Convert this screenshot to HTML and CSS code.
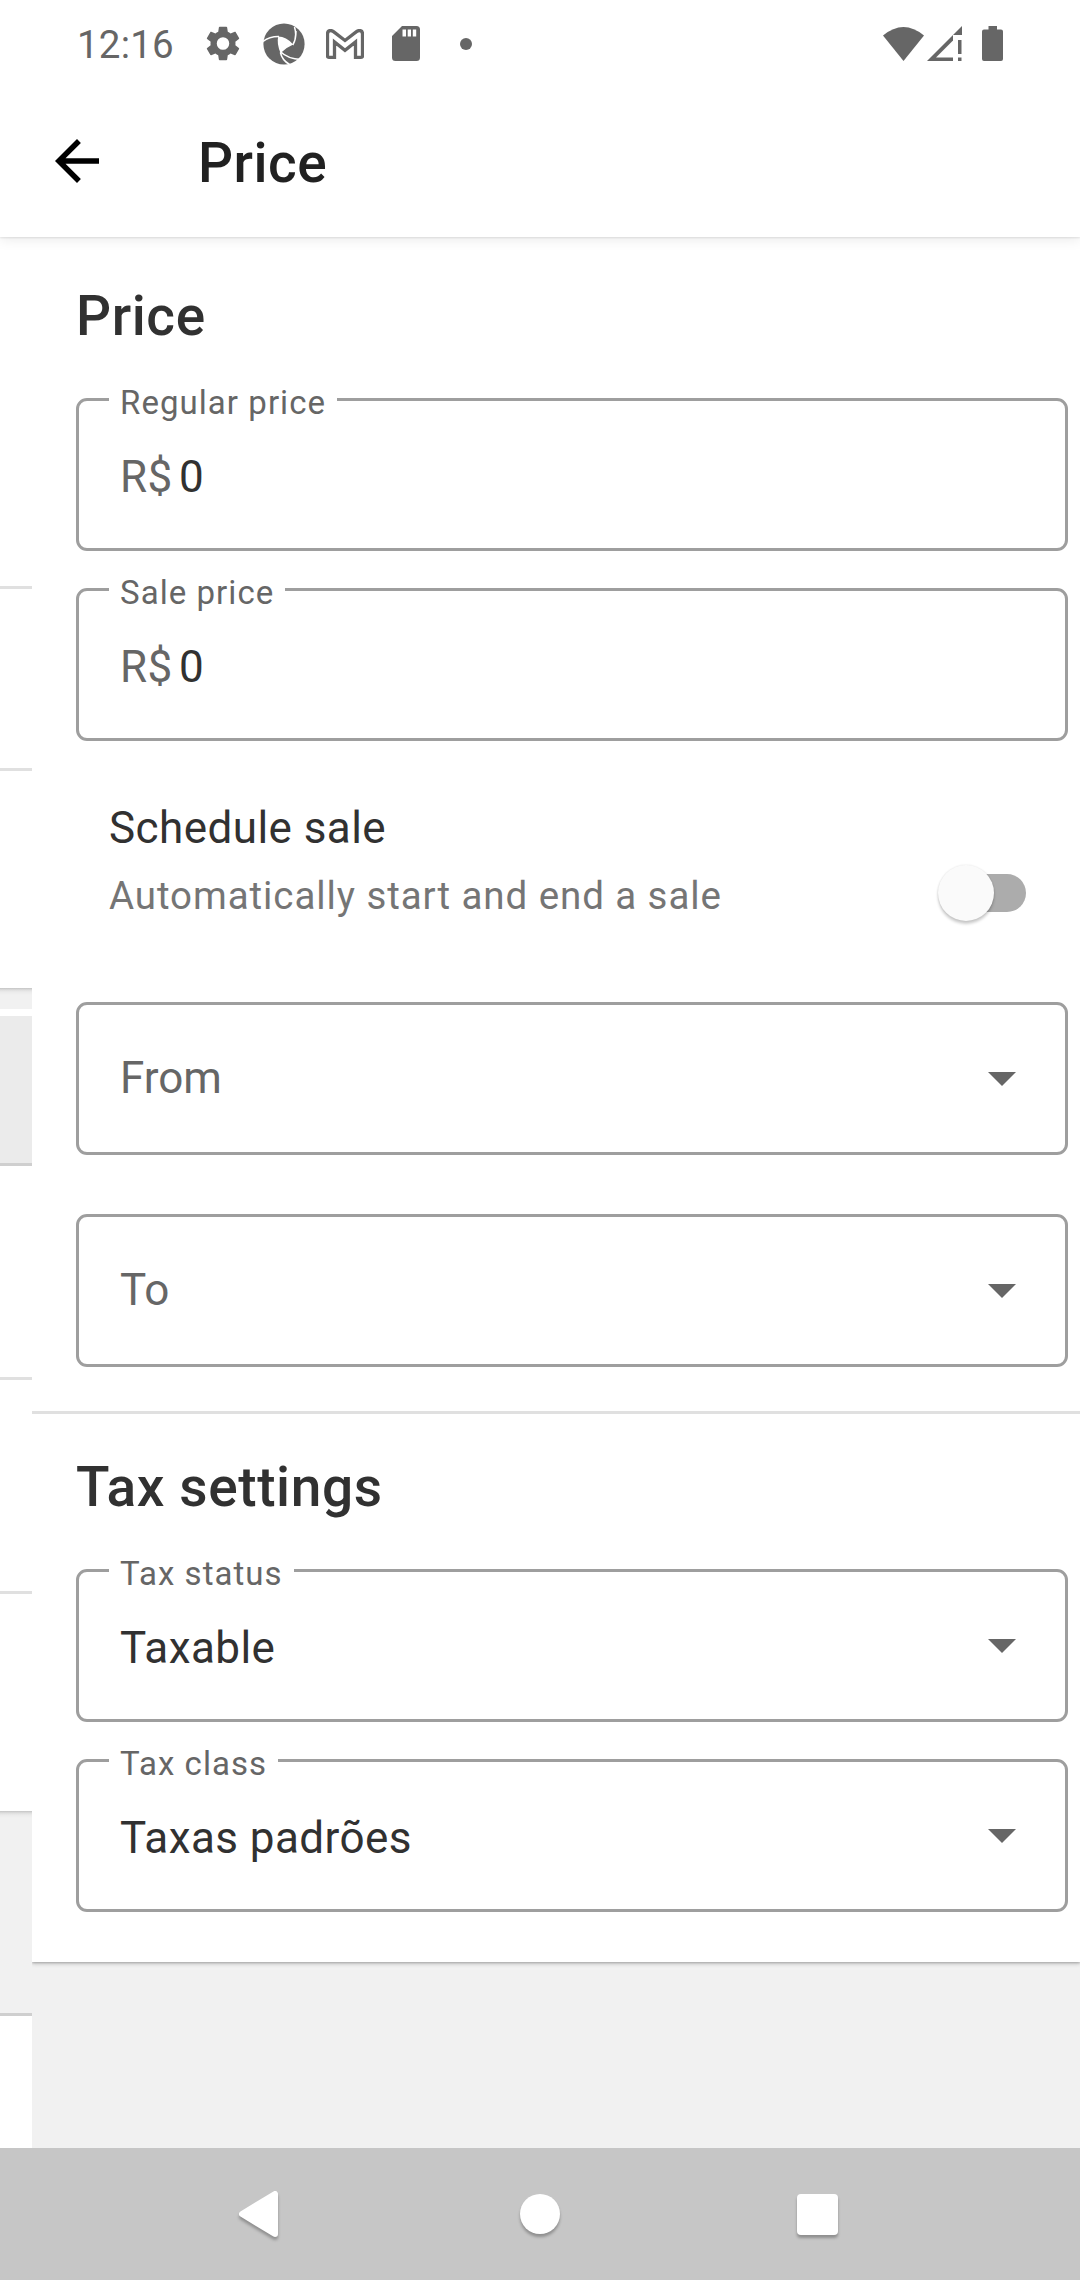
FILE: index.html
```html
<!DOCTYPE html>
<html lang="en">
<head>
<meta charset="utf-8">
<title>Price</title>
<link rel="stylesheet" href="styles.css">
</head>
<body>
<header class="top">
  <div class="status">
    <span class="clock">12:16</span>
    <svg class="ic-gear" width="34" height="35" viewBox="2.2 2 19.6 20" preserveAspectRatio="none"><path d="M19.14 12.94c.04-.3.06-.61.06-.94 0-.32-.02-.64-.07-.94l2.03-1.58c.18-.14.23-.41.12-.61l-1.92-3.32c-.12-.22-.37-.29-.59-.22l-2.39.96c-.5-.38-1.03-.7-1.62-.94L14.4 2.81c-.04-.24-.24-.41-.48-.41h-3.84c-.24 0-.43.17-.47.41L9.25 5.35c-.59.24-1.13.57-1.62.94l-2.39-.96c-.22-.08-.47 0-.59.22L2.74 8.87c-.12.21-.08.47.12.61l2.03 1.58c-.05.3-.09.63-.09.94s.02.64.07.94l-2.03 1.58c-.18.14-.23.41-.12.61l1.92 3.32c.12.22.37.29.59.22l2.39-.96c.5.38 1.03.7 1.62.94l.36 2.54c.05.24.24.41.48.41h3.84c.24 0 .44-.17.47-.41l.36-2.54c.59-.24 1.13-.56 1.62-.94l2.39.96c.22.08.47 0 .59-.22l1.92-3.32c.12-.22.07-.47-.12-.61zM12 15.6A3.6 3.6 0 1 1 12 8.4a3.6 3.6 0 0 1 0 7.2z"/></svg>
    <svg class="ic-shutter" width="42" height="42" viewBox="0 0 42 42"><circle cx="21" cy="21" r="20.6"/><path class="hole" d="M15.2 13.6Q23 13.5 30.2 21.5Q24 24 17.6 30Q13.500 21 15.200 13.600z"/><path class="cut" d="M0 18.500Q6 13.500 16 13.600M31.500 4Q34.500 14 29.800 22M38 36.500Q25 36 17.200 28.500M17.400 29.500Q19 37 26.500 41.500M30 21.500Q33 17 33 8"/></svg>
    <svg class="ic-mail" width="38" height="30" viewBox="0 0 38 30"><path d="M1.500 27V5Q1.500 1.500 4.500 1.500Q6 1.500 7.500 2.600L19 11.500L30.500 2.600Q32 1.500 33.500 1.500Q36.500 1.500 36.500 5V27Q36.500 28.300 35 28.300H29.500V13L19 21.300L8.500 13V28.300H3Q1.500 28.300 1.500 27z"/></svg>
    <svg class="ic-sd" width="28" height="35" viewBox="0 0 28 35"><path fill-rule="evenodd" d="M10 0H24.500Q28 0 28 3.500V31.500Q28 35 24.500 35H3.500Q0 35 0 31.500V10zM10.500 3.500V10.500H14V3.500zM15.700 3.500V10.500H19V3.500zM20.800 3.500V10.500H24.200V3.500z"/></svg>
    <i class="dot"></i>
    <svg class="ic-wifi" width="41" height="34" viewBox="0 0 41 34"><path d="M0 8.500Q20.500 -8.500 41 8.500L20.500 34z"/></svg>
    <svg class="ic-signal" width="35" height="35" viewBox="0 0 35 35"><path fill-rule="evenodd" d="M0 35L35 0V9H26V35zM9 31.500H26V14.500zM31 14H34.500V28H31zM31 31.500H34.500V35H31z"/></svg>
    <svg class="ic-batt" width="21" height="35" viewBox="0 0 21 35"><path d="M6.500 0H15V3.500H19Q21 3.500 21 5.500V33Q21 35 19 35H2Q0 35 0 33V5.500Q0 3.500 2 3.500H6.500z"/></svg>
  </div>
  <div class="appbar">
    <svg width="66" height="66" viewBox="0 0 24 24"><path d="M20 11H7.830l5.590-5.590L12 4l-8 8 8 8 1.410-1.410L7.830 13H20v-2z"/></svg>
    <h1>Price</h1>
  </div>
</header>

<div class="content">
  <aside class="under">
    <div class="row r1"></div>
    <div class="row r2"></div>
    <div class="row r3"></div>
    <div class="gap g1"></div>
    <div class="row pressed"></div>
    <div class="row r4"></div>
    <div class="row r5"></div>
    <div class="row r6"></div>
    <div class="gap g2"></div>
    <div class="rest"></div>
  </aside>

  <main class="panel">
    <div class="card">
      <section class="pricing">
        <h2>Price</h2>
        <fieldset class="field filled">
          <legend>Regular price</legend>
          <div class="control"><span class="prefix">R$</span><span class="value">0</span></div>
        </fieldset>
        <fieldset class="field filled">
          <legend>Sale price</legend>
          <div class="control"><span class="prefix">R$</span><span class="value">0</span></div>
        </fieldset>
        <div class="schedule">
          <div class="texts">
            <div class="name">Schedule sale</div>
            <div class="hint">Automatically start and end a sale</div>
          </div>
          <div class="switch"><i class="thumb"></i></div>
        </div>
        <div class="field date">
          <div class="control"><span class="value">From</span><svg class="caret" width="28" height="14" viewBox="0 0 28 14"><path d="M0 0H28L14 14z"/></svg></div>
        </div>
        <div class="field date">
          <div class="control"><span class="value">To</span><svg class="caret" width="28" height="14" viewBox="0 0 28 14"><path d="M0 0H28L14 14z"/></svg></div>
        </div>
      </section>
      <section class="tax">
        <h2>Tax settings</h2>
        <fieldset class="field filled">
          <legend>Tax status</legend>
          <div class="control"><span class="value">Taxable</span><svg class="caret" width="28" height="14" viewBox="0 0 28 14"><path d="M0 0H28L14 14z"/></svg></div>
        </fieldset>
        <fieldset class="field filled">
          <legend>Tax class</legend>
          <div class="control"><span class="value">Taxas padrões</span><svg class="caret" width="28" height="14" viewBox="0 0 28 14"><path d="M0 0H28L14 14z"/></svg></div>
        </fieldset>
      </section>
    </div>
  </main>
</div>

<nav class="navbar">
  <svg class="nav-back" width="39" height="46" viewBox="0 0 39 46"><path d="M3 23L36 3V43z"/></svg>
  <i class="nav-home"></i>
  <i class="nav-recent"></i>
</nav>
</body>
</html>
```
FILE: styles.css
```css
* { box-sizing: border-box; }

body {
  margin: 0;
  width: 1080px;
  height: 2280px;
  display: flex;
  flex-direction: column;
  overflow: hidden;
  background: #f1f1f1;
  font-family: Roboto, "Noto Sans", sans-serif;
  color: #313131;
}

svg { display: block; flex: none; }
h1, h2 { margin: 0; font-size: 55px; font-weight: 500; line-height: 64px; }

/* status bar and app bar */
.top {
  height: 237px;
  flex: none;
  position: relative;
  z-index: 1;
  background: #fff;
  box-shadow: 0 1px 2px rgba(0, 0, 0, .1), 0 3px 12px rgba(0, 0, 0, .08);
}
.status {
  display: flex;
  align-items: center;
  height: 87px;
  padding: 0 77px;
  fill: #666;
}
.clock {
  width: 129px;
  font-size: 38.500px;
  line-height: 46px;
  letter-spacing: .2px;
  color: #666;
  padding-top: 3px;
}
.ic-gear { margin-right: 23px; }
.ic-shutter { margin-right: 21px; }
.ic-shutter .hole { fill: #fff; }
.ic-shutter .cut { fill: none; stroke: #fff; stroke-width: 1.500px; }
.ic-mail { margin-right: 27.500px; fill: none; stroke: #666; stroke-width: 3.300px; }
.ic-sd { margin-right: 40.500px; }
.dot { width: 12px; height: 12px; border-radius: 50%; background: #666; }
.ic-wifi { margin: 0 3.500px 0 auto; }
.ic-signal { margin-right: 20px; }

.appbar {
  display: flex;
  align-items: center;
  padding: 40px 44px 0;
  gap: 88px;
}
.appbar h1 { color: #212121; padding-top: 4px; letter-spacing: .5px; }
.appbar svg { margin-top: 0; }

/* sliding screens */
.content { flex: 1; display: flex; min-height: 0; }

.under {
  width: 32px;
  flex: none;
  display: flex;
  flex-direction: column;
  background: #fff;
}
.row { flex: none; border-bottom: 3px solid #e0e0e0; }
.r1 { height: 352px; }
.r2 { height: 182px; }
.r3 { height: 217px; border: 0; }
.pressed { height: 157px; border-top: 7px solid #fff; border-bottom-color: #cfcfcf; background: #ebebeb; }
.r4 { height: 214px; }
.r5 { height: 214px; }
.r6 { height: 217px; border: 0; }
.gap { flex: none; background: linear-gradient(#c4c4c4 0, #dedede 2px, #ebebeb 4px, #f1f1f1 7px); }
.g1 { height: 21px; }
.g2 { height: 205px; border-bottom: 3px solid #cfcfcf; }
.rest { flex: 1; }

.panel { flex: 1; min-width: 0; }
.card {
  height: 1725px;
  background: #fff;
  box-shadow: 0 2px 4px rgba(0, 0, 0, .18), 0 1px 2px rgba(0, 0, 0, .18);
  clip-path: inset(0 0 -20px 0);
}
.card section { padding: 0 12px 0 44px; }
.card .pricing { height: 1177px; border-bottom: 3px solid #e0e0e0; padding-top: 47px; }
.card .tax { padding-top: 41px; }
h2 { margin-bottom: 50px; letter-spacing: .6px; }

.field {
  height: 153px;
  margin: 0 0 37px;
  padding: 0 49px 0 30px;
  border: 3px solid #9e9e9e;
  border-radius: 11px;
  min-width: 0;
}
legend {
  height: 3px;
  padding: 0 11px;
  font-size: 33px;
  line-height: 9px;
  letter-spacing: 1.050px;
  color: #666;
}
.control {
  display: flex;
  align-items: center;
  height: 147px;
  padding-left: 11px;
  font-size: 44px;
  line-height: 52px;
  letter-spacing: .440px;
}
.filled .value, .prefix { padding-top: 5px; }
.prefix { color: #666; width: 59px; }
.caret { margin-left: auto; fill: #666; }
.date { margin-bottom: 59px; }
.date .value { color: #666; letter-spacing: 0; padding-bottom: 1px; }

.schedule {
  display: flex;
  justify-content: space-between;
  height: 224px;
  padding: 24px 42px 0 33px;
}
.name { font-size: 44px; line-height: 52px; letter-spacing: .440px; }
.hint { margin-top: 19px; font-size: 38.500px; line-height: 46px; letter-spacing: .920px; color: #757575; }
.switch {
  width: 75px;
  height: 38px;
  margin-top: 72px;
  border-radius: 19px;
  background: #acacac;
}
.thumb {
  display: block;
  width: 56px;
  height: 56px;
  margin: -9px 0 0 -13px;
  border-radius: 50%;
  background: #fafafa;
  box-shadow: 0 3px 3px rgba(0, 0, 0, .2), 0 0 2px rgba(0, 0, 0, .12);
}

/* system navigation */
.navbar {
  flex: none;
  height: 132px;
  display: flex;
  align-items: center;
  padding-left: 239px;
  background: #c6c6c6;
}
.nav-back {
  fill: #fff;
  stroke: #fff;
  stroke-width: 6px;
  stroke-linejoin: round;
  filter: drop-shadow(0 3px 1.500px rgba(0, 0, 0, .28));
}
.nav-home, .nav-recent { background: #fff; box-shadow: 0 3px 3px rgba(0, 0, 0, .28); }
.nav-home { width: 40px; height: 40px; margin-left: 242px; border-radius: 50%; }
.nav-recent { width: 41px; height: 41px; margin-left: 237px; border-radius: 4px; }
```
